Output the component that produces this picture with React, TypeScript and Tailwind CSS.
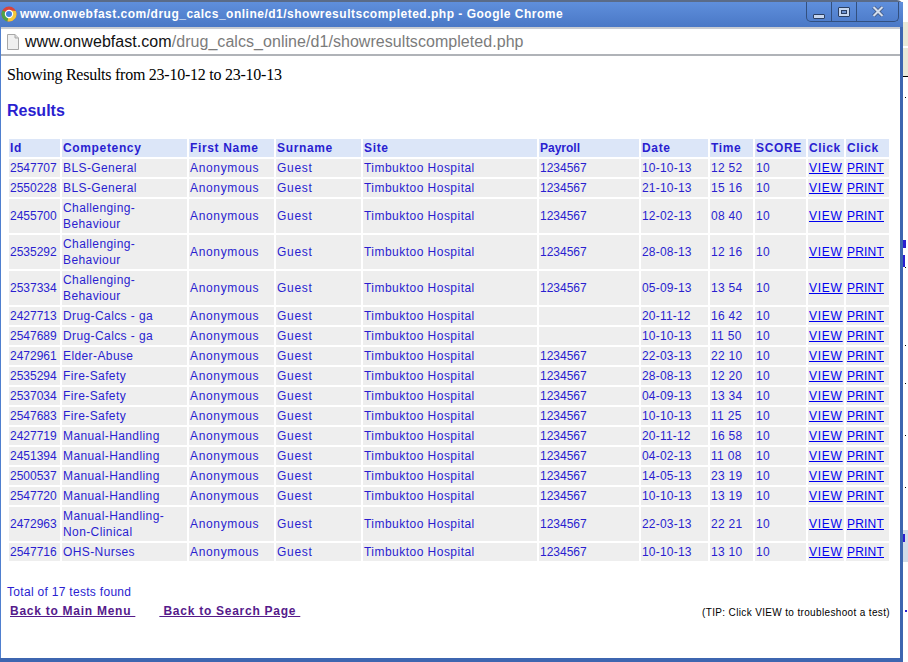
import { Fragment } from "react";

type Row = {
  id: string;
  comp: string[];
  payroll: string;
  date: string;
  time: string;
};

const rows: Row[] = [
  { id: "2547707", comp: ["BLS-General"], payroll: "1234567", date: "10-10-13", time: "12 52" },
  { id: "2550228", comp: ["BLS-General"], payroll: "1234567", date: "21-10-13", time: "15 16" },
  { id: "2455700", comp: ["Challenging-", "Behaviour"], payroll: "1234567", date: "12-02-13", time: "08 40" },
  { id: "2535292", comp: ["Challenging-", "Behaviour"], payroll: "1234567", date: "28-08-13", time: "12 16" },
  { id: "2537334", comp: ["Challenging-", "Behaviour"], payroll: "1234567", date: "05-09-13", time: "13 54" },
  { id: "2427713", comp: ["Drug-Calcs - ga"], payroll: "", date: "20-11-12", time: "16 42" },
  { id: "2547689", comp: ["Drug-Calcs - ga"], payroll: "", date: "10-10-13", time: "11 50" },
  { id: "2472961", comp: ["Elder-Abuse"], payroll: "1234567", date: "22-03-13", time: "22 10" },
  { id: "2535294", comp: ["Fire-Safety"], payroll: "1234567", date: "28-08-13", time: "12 20" },
  { id: "2537034", comp: ["Fire-Safety"], payroll: "1234567", date: "04-09-13", time: "13 34" },
  { id: "2547683", comp: ["Fire-Safety"], payroll: "1234567", date: "10-10-13", time: "11 25" },
  { id: "2427719", comp: ["Manual-Handling"], payroll: "1234567", date: "20-11-12", time: "16 58" },
  { id: "2451394", comp: ["Manual-Handling"], payroll: "1234567", date: "04-02-13", time: "11 08" },
  { id: "2500537", comp: ["Manual-Handling"], payroll: "1234567", date: "14-05-13", time: "23 19" },
  { id: "2547720", comp: ["Manual-Handling"], payroll: "1234567", date: "10-10-13", time: "13 19" },
  { id: "2472963", comp: ["Manual-Handling-", "Non-Clinical"], payroll: "1234567", date: "22-03-13", time: "22 21" },
  { id: "2547716", comp: ["OHS-Nurses"], payroll: "1234567", date: "10-10-13", time: "13 10" },
];

const headers = ["Id", "Competency", "First Name", "Surname", "Site", "Payroll", "Date", "Time", "SCORE", "Click", "Click"];
const widths = [
  "w-[51px]", "w-[125px]", "w-[85px]", "w-[85px]", "w-[174px]", "w-[100px]",
  "w-[67px]", "w-[43px]", "w-[51px]", "w-[36px]", "w-[43px]",
];

// stray marks of the page behind the popup, top offset from the white area
const dots = ["top-[20px]", "top-[190px]", "top-[268px]", "top-[306px]", "top-[358px]", "top-[410px]", "top-[462px]"];

const td = "bg-[#eeeeee] px-px align-middle leading-[16px]";

function ChromeIcon() {
  return (
    <svg width="16" height="16" viewBox="0 0 16 16" className="shrink-0">
      <circle cx="8" cy="8" r="7.5" fill="#d9443a" />
      <path d="M8 8 L1.6 4.2 A7.5 7.5 0 0 0 6.5 15.4 Z" fill="#4ea24a" />
      <path d="M8 8 L6.5 15.4 A7.5 7.5 0 0 0 14.8 5 L8 4.2 Z" fill="#f2c83a" />
      <circle cx="8" cy="8" r="3.6" fill="#3f7fe0" stroke="#ffffff" strokeWidth="1.2" />
    </svg>
  );
}

function PageIcon() {
  return (
    <svg width="12" height="16" viewBox="0 0 12 16" className="shrink-0">
      <path d="M.5.5h7.5l3.5 3.5v11.5H.5z" fill="#f0f0f0" stroke="#a8a8a8" />
      <path d="M8 .5V4h3.5" fill="#d8d8d8" stroke="#a8a8a8" />
    </svg>
  );
}

function WindowButtons() {
  return (
    <div className="flex h-[20px] w-[93px] self-start rounded-b-[5px] border border-t-0 border-[#33507f]">
      <div className="flex w-[25px] items-end justify-center border-r border-[#33507f] pb-[2px]">
        <div className="h-[5px] w-[12px] rounded-[1px] border border-[#2b3f63] bg-[#c6d6ef]" />
      </div>
      <div className="flex w-[25px] items-center justify-center border-r border-[#33507f]">
        <div className="flex h-[10px] w-[12px] items-center justify-center rounded-[1px] border border-[#2b3f63] bg-[#c6d6ef]">
          <div className="h-[4px] w-[6px] border border-[#2b3f63] bg-[#6f93d0]" />
        </div>
      </div>
      <div className="flex flex-1 items-center justify-center">
        <svg width="12" height="11" viewBox="0 0 12 11">
          <path d="M1.5 1 10.5 10M10.5 1 1.5 10" stroke="#33466b" strokeWidth="3.4" fill="none" />
          <path d="M1.5 1 10.5 10M10.5 1 1.5 10" stroke="#d3deef" strokeWidth="2.2" fill="none" />
        </svg>
      </div>
    </div>
  );
}

function PageBehind() {
  return (
    <div className="relative flex h-full flex-1 flex-col bg-white">
      <div className="h-[22px] bg-white" />
      <div className="h-[24px] bg-[#e9e9d8]" />
      <div className="h-[2px] bg-white" />
      <div className="h-[28px] bg-[#e9e9d8]" />
      <div className="h-px bg-black" />
      <div className="relative flex-1 bg-white">
        {dots.map((d) => (
          <div key={d} className={`absolute left-[2px] h-px w-px bg-black ${d}`} />
        ))}
        <div className="absolute left-0 top-[163px] h-[8px] w-[3px] bg-[#2a1ed0]" />
        <div className="absolute left-0 top-[178px] h-[12px] w-[2px] bg-[#2a1ed0]" />
        <div className="absolute bottom-[100px] left-0 h-[32px] w-full bg-[#d2dce8]" />
        <div className="absolute bottom-[120px] left-0 h-[8px] w-[2px] bg-[#2a1ed0]" />
        <div className="absolute bottom-[50px] left-[2px] h-[2px] w-[2px] bg-[#2a1ed0]" />
      </div>
    </div>
  );
}

export default function App() {
  return (
    <div className="flex h-[662px] w-[908px] overflow-hidden bg-white font-['Liberation_Sans',Arial,sans-serif] text-[12px]">
      <div className="flex h-full w-[903px] shrink-0 flex-col rounded-tr-[6px] border-t-2 border-t-[#5a6b88] bg-[#4f7fcf]">
        <div className="flex h-[25px] shrink-0 items-start justify-between bg-gradient-to-b from-[#5f8fdc] to-[#4a78c6] pl-[1px] pr-[4px]">
          <div className="flex items-center gap-[3px] pt-[3px]">
            <ChromeIcon />
            <span className="text-[12px] font-bold tracking-[0.5px] text-white">
              www.onwebfast.com/drug_calcs_online/d1/showresultscompleted.php - Google Chrome
            </span>
          </div>
          <WindowButtons />
        </div>
        <div className="flex min-h-0 flex-1 flex-col border-r-[3px] border-b-[4px] border-r-[#3d66b0] border-b-[#3d66b0] pl-px">
          <div className="flex h-[29px] shrink-0 items-center gap-[6px] border-y-2 border-t-[#c9ccd2] border-b-[#b0b3b8] bg-white pl-[6px]">
            <PageIcon />
            <span className="text-[16px] tracking-[0.05px] text-[#111111]">
              www.onwebfast.com<span className="text-[#7b7b7b]">/drug_calcs_online/d1/showresultscompleted.php</span>
            </span>
          </div>
          <div className="min-h-0 flex-1 overflow-hidden bg-white pl-[6px] text-[#2a1ed0]">
            <p className="mt-[10px] font-['Liberation_Serif',serif] text-[16px] leading-[18px] tracking-[-0.25px] text-black">
              Showing Results from 23-10-12 to 23-10-13
            </p>
            <h1 className="mt-[18px] text-[16px] font-bold leading-[18px]">Results</h1>
            <table className="mt-[17px] w-[884px] table-fixed border-separate border-spacing-[2px] tracking-[0.3px]">
              <colgroup>
                {widths.map((w, i) => (
                  <col key={i} className={w} />
                ))}
              </colgroup>
              <thead>
                <tr className="h-[18px]">
                  {headers.map((h, i) => (
                    <th
                      key={i}
                      className={`bg-[#dce6f8] px-px text-left font-bold leading-[16px] ${i === 5 ? "tracking-normal" : "tracking-[0.65px]"}`}
                    >
                      {h}
                    </th>
                  ))}
                </tr>
              </thead>
              <tbody>
                {rows.map((r) => (
                  <tr key={r.id} className={r.comp.length > 1 ? "h-[34px]" : "h-[18px]"}>
                    <td className={`${td} tracking-normal`}>{r.id}</td>
                    <td className={`${td} tracking-[0.4px]`}>
                      {r.comp.map((c, i) => (
                        <Fragment key={i}>
                          {i > 0 && <br />}
                          {c}
                        </Fragment>
                      ))}
                    </td>
                    <td className={`${td} tracking-[0.65px]`}>Anonymous</td>
                    <td className={`${td} tracking-[0.7px]`}>Guest</td>
                    <td className={`${td} tracking-[0.47px]`}>Timbuktoo Hospital</td>
                    <td className={`${td} tracking-normal`}>{r.payroll}</td>
                    <td className={`${td} tracking-[0.2px]`}>{r.date}</td>
                    <td className={td}>{r.time}</td>
                    <td className={td}>10</td>
                    <td className={`${td} tracking-[0.75px]`}>
                      <a href="#" className="text-[#0000ee] underline">VIEW</a>
                    </td>
                    <td className={`${td} tracking-[0.2px]`}>
                      <a href="#" className="text-[#0000ee] underline">PRINT</a>
                    </td>
                  </tr>
                ))}
              </tbody>
            </table>
            <p className="mt-[21px] leading-[16px] tracking-[0.3px]">Total of 17 tests found</p>
            <div className="flex items-start justify-between pr-[10px]">
              <div className="mt-[2px] flex pl-[3px] font-bold tracking-[0.74px] text-[#551a8b]">
                <a href="#" className="whitespace-pre underline">Back to Main Menu </a>
                <a href="#" className="ml-[24px] whitespace-pre underline"> Back to Search Page </a>
              </div>
              <span className="mt-[5px] text-[10px] tracking-[0.35px] text-black">
                (TIP: Click VIEW to troubleshoot a test)
              </span>
            </div>
          </div>
        </div>
      </div>
      <PageBehind />
    </div>
  );
}
